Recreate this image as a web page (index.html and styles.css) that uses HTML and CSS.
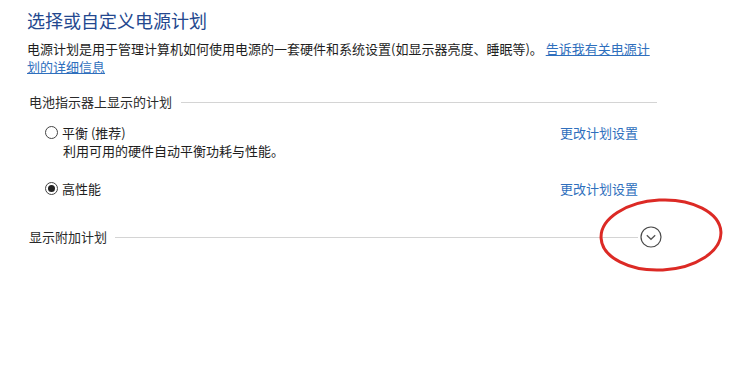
FILE: index.html
```html
<!DOCTYPE html>
<html lang="zh-CN">
<head>
<meta charset="utf-8">
<title>电源选项</title>
<link rel="stylesheet" href="styles.css">
</head>
<body>
<main class="page">
  <h1 class="title">选择或自定义电源计划</h1>
  <p class="desc">电源计划是用于管理计算机如何使用电源的一套硬件和系统设置(如显示器亮度、睡眠等)。 <a class="link" href="#">告诉我有关电源计划的详细信息</a></p>

  <section class="group">
    <div class="group-head">
      <span class="group-label">电池指示器上显示的计划</span>
      <span class="rule"></span>
    </div>

    <div class="plan">
      <div class="plan-row">
        <label class="radio"><span class="dot"></span><span>平衡 (推荐)</span></label>
        <a class="link change" href="#">更改计划设置</a>
      </div>
      <div class="plan-desc">利用可用的硬件自动平衡功耗与性能。</div>
    </div>

    <div class="plan">
      <div class="plan-row">
        <label class="radio"><span class="dot checked"></span><span>高性能</span></label>
        <a class="link change" href="#">更改计划设置</a>
      </div>
    </div>
  </section>

  <div class="group-head more">
    <span class="group-label">显示附加计划</span>
    <span class="rule"></span>
    <span class="expand">
      <svg class="chev" width="22" height="22" viewBox="0 0 22 22" aria-hidden="true">
        <circle cx="11" cy="11" r="10" fill="none" stroke="#4a4a4a" stroke-width="1.2"/>
        <path d="M6.8 9.3 L11 13.3 L15.2 9.3" fill="none" stroke="#555" stroke-width="1.3"/>
      </svg>
      <svg class="mark" width="128" height="80" viewBox="0 0 128 80" aria-hidden="true">
        <ellipse cx="63" cy="38" rx="60" ry="35" fill="none" stroke="#dc2a25" stroke-width="3" transform="rotate(-3 63 38)"/>
      </svg>
    </span>
  </div>
</main>
</body>
</html>
```

FILE: styles.css
```css
html, body {
  margin: 0;
  background: #ffffff;
}

body {
  min-height: 383px;
  font-family: "Noto Sans CJK SC", "Noto Sans", "Liberation Sans", sans-serif;
  color: #1e1e1e;
  font-size: 13px;
}

.page {
  width: 630px;
  padding: 8px 0 0 27px;
}

.title {
  margin: 0;
  font-size: 18px;
  font-weight: normal;
  line-height: 24px;
  color: #24488f;
}

.desc {
  margin: 8px 0 0;
  line-height: 18px;
}

.link {
  color: #2f6fbd;
  text-decoration: underline;
}

.group {
  margin-top: 16px;
}

.group-head {
  display: flex;
  align-items: center;
  gap: 9px;
  padding-left: 2px;
  line-height: 20px;
  color: #2a2a2a;
}

.rule {
  flex: 1;
  height: 1px;
  background: #d4d4d4;
}

.plan {
  padding: 0 19px 0 18px;
}

.plan-row {
  display: flex;
  align-items: center;
  justify-content: space-between;
  height: 22px;
  margin-top: 9px;
}

.plan + .plan .plan-row {
  margin-top: 16px;
}

.radio {
  display: flex;
  align-items: center;
  gap: 4px;
}

.dot {
  width: 11px;
  height: 11px;
  border: 1px solid #444;
  border-radius: 50%;
  display: flex;
  align-items: center;
  justify-content: center;
}

.dot.checked::after {
  content: "";
  width: 7px;
  height: 7px;
  border-radius: 50%;
  background: #222;
}

.change {
  text-decoration: none;
}

.plan-desc {
  padding-left: 18px;
  line-height: 20px;
  margin-top: -2px;
}

.more {
  margin-top: 27px;
  width: 633px;
  gap: 8px;
}

.more .rule {
  margin-right: -6px;
}

.expand {
  position: relative;
  width: 22px;
  height: 22px;
  flex: none;
}

.chev {
  display: block;
  width: 22px;
  height: 22px;
}

.mark {
  position: absolute;
  left: -42px;
  top: -29px;
  width: 128px;
  height: 80px;
  overflow: visible;
}
```
